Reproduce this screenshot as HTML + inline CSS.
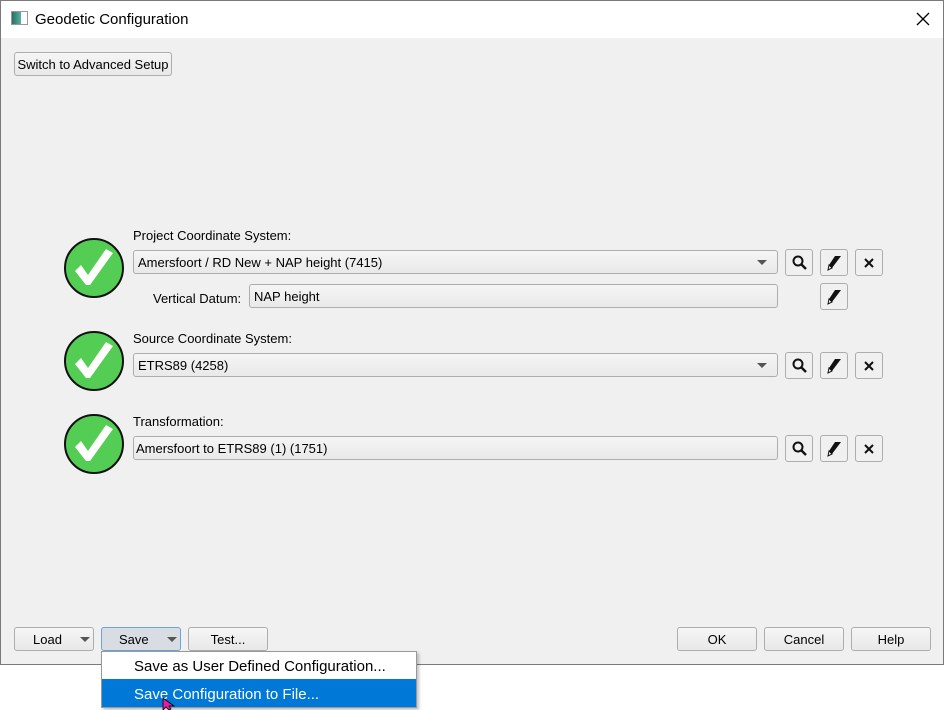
<!DOCTYPE html>
<html><head><style>
body{margin:0;width:949px;height:710px;background:#fff;position:relative;overflow:hidden;font-family:"Liberation Sans",Arial,sans-serif;font-size:13px;color:#000}
.a{position:absolute;box-sizing:border-box}
.win{left:0;top:0;width:944px;height:665px;border:1px solid #7a7a7a;background:#f0f0f0}
.title{left:1px;top:1px;width:942px;height:37px;background:#fff}
.btn{border:1px solid #adadad;border-radius:3px;background:linear-gradient(#f6f6f6,#e8e8e8);text-align:center;line-height:23px;font-size:13px}
.field{border:1px solid #adadad;border-radius:3px;background:linear-gradient(#f5f5f5,#e9e9e9);line-height:23px;padding-left:4px;font-size:13px}
.ib{width:28px;height:27px;border:1px solid #adadad;border-radius:3px;background:#f0f0f0;display:flex;align-items:center;justify-content:center}
.chk{width:60px;height:60px;border-radius:50%;background:#54cd54;border:2px solid #111}
.arr{width:0;height:0;border-left:5px solid transparent;border-right:5px solid transparent;border-top:5px solid #555}
.lbl{font-size:13px}
</style></head><body>
<div class="a win"></div>
<div class="a title"></div>
<div class="a" style="left:11px;top:11px;width:17px;height:14px;border:1px solid #999;background:linear-gradient(90deg,#2a7060,#5ab0a0 60%,#fff 60%)"></div>
<div class="a" style="left:35px;top:11px;font-size:15px">Geodetic Configuration</div>
<svg class="a" style="left:916px;top:12px" width="14" height="14"><path d="M1 1 L13 13 M13 1 L1 13" stroke="#000" stroke-width="1.3"/></svg>

<div class="a btn" style="left:14px;top:52px;width:158px;height:24px">Switch to Advanced Setup</div>

<svg width="0" height="0" style="position:absolute"><defs>
<g id="ck"><path d="M9 31 L20 45 L24 45 L47 13 L40 9 L22 35 L15 25 Z" fill="#fff"/></g>
<g id="mag"><circle cx="7" cy="7" r="4.5" fill="none" stroke="#111" stroke-width="2"/><path d="M10.5 10.5 L15 15" stroke="#111" stroke-width="2.4"/></g>
<g id="pen"><path d="M9 2 L15 2 L6 14 L2 16 L3 11 Z" fill="#111"/><path d="M3 11 L6 14 L2 16 Z" fill="#fff" stroke="#111" stroke-width="1"/></g>
<g id="x"><path d="M3 3 L11 11 M11 3 L3 11" stroke="#111" stroke-width="2"/></g>
</defs></svg>

<!-- row 1 -->
<div class="a chk" style="left:64px;top:238px"><svg width="60" height="60" style="position:absolute;left:-2px;top:-2px"><use href="#ck" x="2" y="2"/></svg></div>
<div class="a lbl" style="left:133px;top:228px">Project Coordinate System:</div>
<div class="a field" style="left:133px;top:250px;width:645px;height:24px">Amersfoort / RD New + NAP height (7415)<div class="a arr" style="right:10px;top:9px"></div></div>
<div class="a ib" style="left:785px;top:249px"><svg width="17" height="17"><use href="#mag"/></svg></div>
<div class="a ib" style="left:820px;top:249px"><svg width="17" height="18"><use href="#pen"/></svg></div>
<div class="a ib" style="left:855px;top:249px"><svg width="14" height="14"><use href="#x"/></svg></div>
<div class="a lbl" style="left:153px;top:291px">Vertical Datum:</div>
<div class="a field" style="left:249px;top:284px;width:529px;height:24px">NAP height</div>
<div class="a ib" style="left:820px;top:283px"><svg width="17" height="18"><use href="#pen"/></svg></div>

<!-- row 2 -->
<div class="a chk" style="left:64px;top:331px"><svg width="60" height="60" style="position:absolute;left:-2px;top:-2px"><use href="#ck" x="2" y="2"/></svg></div>
<div class="a lbl" style="left:133px;top:331px">Source Coordinate System:</div>
<div class="a field" style="left:133px;top:353px;width:645px;height:24px">ETRS89 (4258)<div class="a arr" style="right:10px;top:9px"></div></div>
<div class="a ib" style="left:785px;top:352px"><svg width="17" height="17"><use href="#mag"/></svg></div>
<div class="a ib" style="left:820px;top:352px"><svg width="17" height="18"><use href="#pen"/></svg></div>
<div class="a ib" style="left:855px;top:352px"><svg width="14" height="14"><use href="#x"/></svg></div>

<!-- row 3 -->
<div class="a chk" style="left:64px;top:414px"><svg width="60" height="60" style="position:absolute;left:-2px;top:-2px"><use href="#ck" x="2" y="2"/></svg></div>
<div class="a lbl" style="left:133px;top:414px">Transformation:</div>
<div class="a field" style="left:133px;top:436px;width:645px;height:24px;padding-left:2px">Amersfoort to ETRS89 (1) (1751)</div>
<div class="a ib" style="left:785px;top:435px"><svg width="17" height="17"><use href="#mag"/></svg></div>
<div class="a ib" style="left:820px;top:435px"><svg width="17" height="18"><use href="#pen"/></svg></div>
<div class="a ib" style="left:855px;top:435px"><svg width="14" height="14"><use href="#x"/></svg></div>

<!-- bottom buttons -->
<div class="a btn" style="left:14px;top:627px;width:80px;height:24px;text-align:left;padding-left:18px">Load<div class="a arr" style="left:65px;top:9px"></div></div>
<div class="a btn" style="left:101px;top:627px;width:80px;height:24px;text-align:left;padding-left:17px;background:#d8dde3;border-color:#6aa6dd">Save<div class="a arr" style="left:65px;top:9px"></div></div>
<div class="a btn" style="left:188px;top:627px;width:80px;height:24px">Test...</div>
<div class="a btn" style="left:677px;top:627px;width:80px;height:24px">OK</div>
<div class="a btn" style="left:764px;top:627px;width:80px;height:24px">Cancel</div>
<div class="a btn" style="left:851px;top:627px;width:80px;height:24px">Help</div>

<!-- menu -->
<div class="a" style="left:101px;top:651px;width:316px;height:57px;background:#fff;border:1px solid #999;box-shadow:2px 2px 3px rgba(0,0,0,.25)"></div>
<div class="a" style="left:134px;top:658px;font-size:15px">Save as User Defined Configuration...</div>
<div class="a" style="left:102px;top:679px;width:314px;height:28px;background:#0078d7"></div>
<div class="a" style="left:134px;top:686px;font-size:15px;color:#fff">Save Configuration to File...</div>
<svg class="a" style="left:162px;top:697px" width="16" height="13"><path d="M1 1 L1 13 L4 10 L7 13 L9 12 L7 9 L12 9 Z" fill="#e020a0" stroke="#000" stroke-width="0.8"/></svg>
</body></html>
